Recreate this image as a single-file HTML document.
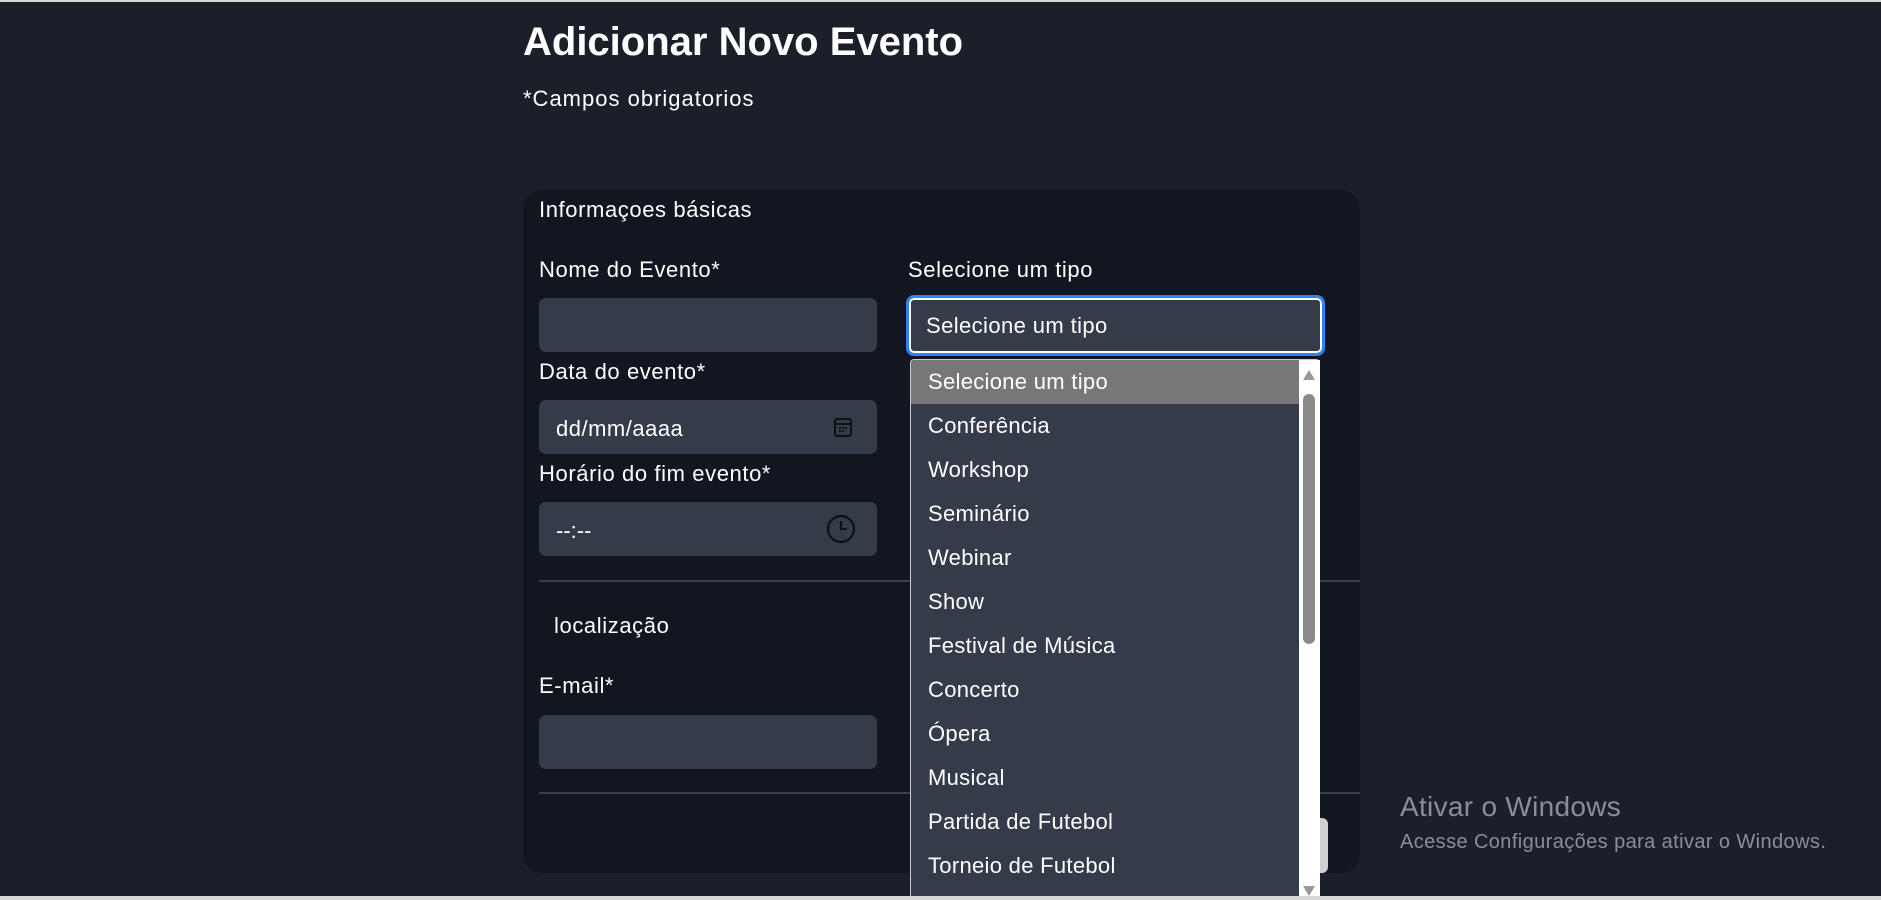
<!DOCTYPE html>
<html><head><meta charset="utf-8"><style>
*{box-sizing:border-box;margin:0;padding:0}
body{width:1881px;height:898px;overflow:hidden;background:#1b1f2a;font-family:"Liberation Sans",sans-serif;color:#fff;position:relative;border-top:2px solid #d8d8d8}
.a{position:absolute;white-space:nowrap}
.lbl{font-size:22px;letter-spacing:0.6px}
.inp{position:absolute;background:#343b49;border-radius:7px;left:539px;width:338px;height:54px}
.card{position:absolute;left:523px;top:188px;width:837px;height:683px;background:#111620;border-radius:19px}
.hr{position:absolute;left:539px;width:821px;height:2px;background:#3a3f48}
.dd{position:absolute;left:910px;top:357px;width:410px;height:541px;background:#343b49;border:1px solid #ccc;border-bottom:none;border-radius:4px 4px 0 0;overflow:hidden}
.dd div{height:44px;line-height:44px;padding-left:17px;font-size:22px;letter-spacing:0.3px}
</style></head><body>
<div class="a" style="left:523px;top:18px;font-size:40px;font-weight:bold">Adicionar Novo Evento</div>
<div class="a" style="left:523px;top:84px;font-size:22px;letter-spacing:1px">*Campos obrigatorios</div>
<div class="card"></div>
<div class="a lbl" style="left:539px;top:195px">Informaçoes básicas</div>
<div class="a lbl" style="left:539px;top:255px">Nome do Evento*</div>
<div class="inp" style="top:296px"></div>
<div class="a lbl" style="left:908px;top:255px">Selecione um tipo</div>
<div class="a" style="left:906px;top:293px;width:419px;height:61px;border:3px solid #2f81f7;border-radius:8px;background:#343b49;box-shadow:inset 0 0 0 2px #fff"></div>
<div class="a" style="left:926px;top:311px;font-size:22px;letter-spacing:0.4px">Selecione um tipo</div>
<div class="a lbl" style="left:539px;top:357px">Data do evento*</div>
<div class="inp" style="top:398px"></div>
<div class="a" style="left:556px;top:414px;font-size:22px;letter-spacing:0.5px">dd/mm/aaaa</div>
<svg class="a" style="left:832px;top:414px" width="22" height="22" viewBox="0 0 22 22"><rect x="3" y="3" width="16" height="17" rx="2" fill="none" stroke="#111" stroke-width="2"/><line x1="3" y1="8" x2="19" y2="8" stroke="#111" stroke-width="2"/><g fill="#111"><rect x="7" y="11" width="2" height="2"/><rect x="10" y="11" width="2" height="2"/><rect x="13" y="11" width="2" height="2"/><rect x="7" y="14" width="2" height="2"/><rect x="10" y="14" width="2" height="2"/></g></svg>
<div class="a lbl" style="left:539px;top:459px">Horário do fim evento*</div>
<div class="inp" style="top:500px"></div>
<div class="a" style="left:556px;top:516px;font-size:22px">--:--</div>
<svg class="a" style="left:826px;top:512px" width="30" height="30" viewBox="0 0 30 30"><circle cx="15" cy="15" r="13" fill="none" stroke="#111" stroke-width="2.2"/><path d="M15 7v8h6" fill="none" stroke="#111" stroke-width="2.2"/></svg>
<div class="hr" style="top:578px"></div>
<div class="a lbl" style="left:554px;top:611px">localização</div>
<div class="a lbl" style="left:539px;top:671px">E-mail*</div>
<div class="inp" style="top:713px"></div>
<div class="hr" style="top:790px"></div>
<div class="a" style="left:1300px;top:816px;width:28px;height:55px;background:#d0d0d0;border-radius:6px"></div>
<div class="dd">
<div style="background:#777">Selecione um tipo</div>
<div>Conferência</div><div>Workshop</div><div>Seminário</div><div>Webinar</div><div>Show</div><div>Festival de Música</div><div>Concerto</div><div>Ópera</div><div>Musical</div><div>Partida de Futebol</div><div>Torneio de Futebol</div>
</div>
<div class="a" style="left:1299px;top:358px;width:21px;height:540px;background:#fff"></div>
<div class="a" style="left:1303px;top:392px;width:12px;height:250px;background:#8a8a8a;border-radius:6px"></div>
<div class="a" style="left:1303px;top:368px;width:0;height:0;border-left:6px solid transparent;border-right:6px solid transparent;border-bottom:10px solid #999"></div>
<div class="a" style="left:1303px;top:884px;width:0;height:0;border-left:6px solid transparent;border-right:6px solid transparent;border-top:10px solid #999"></div>
<div class="a" style="left:0;top:894px;width:1881px;height:4px;background:#d8d8d8"></div>
<div class="a" style="left:1400px;top:789px;font-size:28px;color:#8b8e94;letter-spacing:0.3px">Ativar o Windows</div>
<div class="a" style="left:1400px;top:829px;font-size:20px;color:#8b8e94;letter-spacing:0.4px">Acesse Configurações para ativar o Windows.</div>
</body></html>
